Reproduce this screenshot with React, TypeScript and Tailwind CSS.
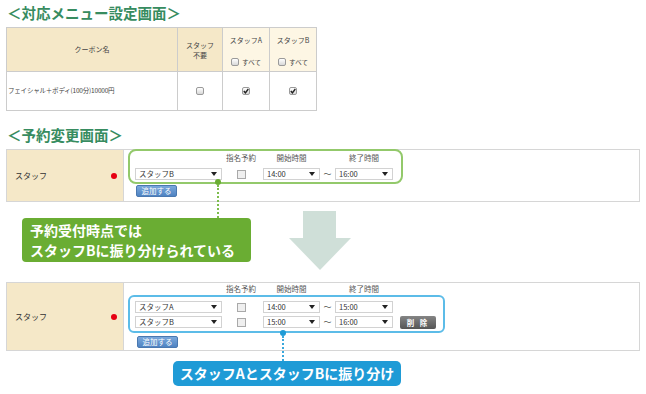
import React from "react";

// small pieces
function Caret() {
  return (
    <svg width="6" height="4" viewBox="0 0 6 4" className="shrink-0">
      <polygon points="0,0 6,0 3,4" fill="#222" />
    </svg>
  );
}

function Select({ value, w }: { value: string; w: string }) {
  return (
    <div
      className={`${w} h-[12px] shrink-0 border border-[#d2d2d2] bg-white flex items-center justify-between pl-[3px] pr-[4px] text-[7.5px] leading-none text-[#333]`}
    >
      <span>{value}</span>
      <Caret />
    </div>
  );
}

function Tick({ checked }: { checked?: boolean }) {
  return (
    <span className="inline-flex w-[8px] h-[8px] rounded-[2px] border border-[#9a9a9a] bg-linear-to-b from-white to-[#d8d8d8] items-center justify-center">
      {checked && (
        <svg width="6" height="6" viewBox="0 0 6 6">
          <path d="M0.8 3.1 L2.4 4.8 L5.3 1" stroke="#222" strokeWidth="1.4" fill="none" />
        </svg>
      )}
    </span>
  );
}

function Box() {
  return <span className="block w-[9px] h-[9px] border border-[#a9a9a9] bg-[#efefef]" />;
}

function Row({ staff, from, to, del }: { staff: string; from: string; to: string; del?: boolean }) {
  return (
    <div className="flex items-center h-[12px]">
      <Select value={staff} w="w-[87px]" />
      <div className="w-[4px]" />
      <div className="w-[30px] flex justify-center">
        <Box />
      </div>
      <div className="w-[7px]" />
      <Select value={from} w="w-[57px]" />
      <div className="w-[15px] text-center text-[8px] leading-none text-[#555]">～</div>
      <Select value={to} w="w-[58px]" />
      {del && (
        <>
          <div className="w-[7px]" />
          <div className="w-[36px] h-[13px] rounded-[2px] bg-linear-to-b from-[#858585] to-[#555] text-white text-[7.5px] font-bold leading-[13px] text-center tracking-[2px]">
            削 除
          </div>
        </>
      )}
    </div>
  );
}

function Labels() {
  return (
    <div className="flex items-center h-[12px] text-[7.5px] leading-none text-[#555]">
      <div className="w-[87px]" />
      <div className="w-[4px]" />
      <div className="w-[30px] text-center whitespace-nowrap">指名予約</div>
      <div className="w-[7px]" />
      <div className="w-[57px] text-center">開始時間</div>
      <div className="w-[15px]" />
      <div className="w-[58px] text-center">終了時間</div>
    </div>
  );
}

function AddButton() {
  return (
    <div className="w-[41px] h-[12px] rounded-[2px] border border-[#4a78b0] bg-linear-to-b from-[#7aa8dc] to-[#4f83c2] text-white text-[7.5px] leading-[10px] text-center">
      追加する
    </div>
  );
}

function StaffLabel() {
  return (
    <div className="w-[117px] shrink-0 bg-[#f5e8c8] border-r border-[#d6d6d6] flex items-center justify-between pl-[8px] pr-[6px] text-[8px] text-[#333]">
      <span>スタッフ</span>
      <span className="w-[6px] h-[6px] rounded-full bg-[#e60012]" />
    </div>
  );
}

export default function App() {
  return (
    <div className="relative w-[646px] h-[394px] bg-white overflow-hidden font-['Noto_Sans_CJK_JP','Noto_Sans',sans-serif] text-[#333]">
      <div className="flex flex-col items-start pl-[6px]">
        <h1 className="mt-[5px] ml-[1px] h-[15px] text-[14.5px] leading-[15px] font-bold text-[#378c60]">
          ＜対応メニュー設定画面＞
        </h1>

        {/* menu table */}
        <div className="mt-[7px] border-t border-l border-[#cccccc] grid grid-cols-[171px_45px_47px_47px] text-[7px] text-[#444]">
          <div className="h-[44px] bg-[#f5e8c8] border-r border-b border-[#cccccc] flex items-center justify-center">
            クーポン名
          </div>
          <div className="h-[44px] bg-[#f5e8c8] border-r border-b border-[#cccccc] flex flex-col items-center justify-center leading-[10px]">
            <span>スタッフ</span>
            <span>不要</span>
          </div>
          {["スタッフA", "スタッフB"].map((s) => (
            <div
              key={s}
              className="h-[44px] bg-[#fdf6e4] border-r border-b border-[#cccccc] flex flex-col items-center justify-between pt-[9px] pb-[5px] leading-none"
            >
              <span>{s}</span>
              <span className="flex items-center gap-[3px]">
                <Tick />
                <span className="text-[6.5px]">すべて</span>
              </span>
            </div>
          ))}
          <div className="h-[39px] border-r border-b border-[#cccccc] flex items-center pl-[1px] text-[6.5px] tracking-[-0.2px]">
            フェイシャル＋ボディ(100分)10000円
          </div>
          <div className="h-[39px] border-r border-b border-[#cccccc] flex items-center justify-center">
            <Tick />
          </div>
          <div className="h-[39px] border-r border-b border-[#cccccc] flex items-center justify-center">
            <Tick checked />
          </div>
          <div className="h-[39px] border-r border-b border-[#cccccc] flex items-center justify-center">
            <Tick checked />
          </div>
        </div>

        <h1 className="mt-[16px] ml-[1px] h-[15px] text-[14.5px] leading-[15px] font-bold text-[#378c60]">
          ＜予約変更画面＞
        </h1>

        {/* form before */}
        <div className="mt-[7px] w-[634px] border border-[#d6d6d6] flex">
          <StaffLabel />
          <div className="flex flex-col items-start pl-[4px]">
            <div className="-mt-px border-2 border-[#93c96b] rounded-[8px] pl-[5px] pr-[8px] pt-[1px] pb-[2px] flex flex-col gap-[4px]">
              <Labels />
              <Row staff="スタッフB" from="14:00" to="16:00" />
            </div>
            <div className="mt-[1px] ml-[8px] mb-[4px]">
              <AddButton />
            </div>
          </div>
        </div>

        {/* middle */}
        <div className="h-[80px] flex items-start">
          <div className="mt-[16px] ml-[16px] w-[229px] h-[44px] rounded-[4px] bg-[#6aad33] text-white text-[14px] font-bold leading-[14px] pl-[8px] flex flex-col justify-center gap-[6px]">
            <span>予約受付時点では</span>
            <span>スタッフBに振り分けられている</span>
          </div>
          <svg width="62" height="59" viewBox="0 0 62 59" className="mt-[9px] ml-[38px]">
            <polygon points="14,0 47,0 47,27 62,27 31,59 0,27 14,27" fill="#cfdfd8" />
          </svg>
        </div>

        {/* form after */}
        <div className="w-[634px] border border-[#d6d6d6] flex">
          <StaffLabel />
          <div className="flex flex-col items-start pl-[4px]">
            <div className="pl-[7px]">
              <Labels />
            </div>
            <div className="border-2 border-[#5cbce8] rounded-[6px] pl-[5px] pr-[7px] pt-[4px] pb-[3px] flex flex-col gap-[3px]">
              <Row staff="スタッフA" from="14:00" to="15:00" />
              <Row staff="スタッフB" from="15:00" to="16:00" del />
            </div>
            <div className="mt-[3px] ml-[9px] mb-[2px]">
              <AddButton />
            </div>
          </div>
        </div>

        <div className="mt-[10px] ml-[167px] w-[228px] h-[25px] rounded-[5px] bg-[#1f9bd6] text-white text-[14px] font-bold flex items-center justify-center">
          スタッフAとスタッフBに振り分け
        </div>
      </div>

      {/* connectors */}
      <div className="absolute left-[215px] top-[179px] flex flex-col items-center">
        <span className="w-[6px] h-[6px] rounded-full bg-[#6aad33]" />
        <span className="h-[33px] border-l-2 border-dotted border-[#7dbd4c]" />
      </div>
      <div className="absolute left-[280px] top-[330px] flex flex-col items-center">
        <span className="w-[6px] h-[6px] rounded-full bg-[#1f9bd6]" />
        <span className="h-[25px] border-l-2 border-dotted border-[#3aa8dc]" />
      </div>
    </div>
  );
}
